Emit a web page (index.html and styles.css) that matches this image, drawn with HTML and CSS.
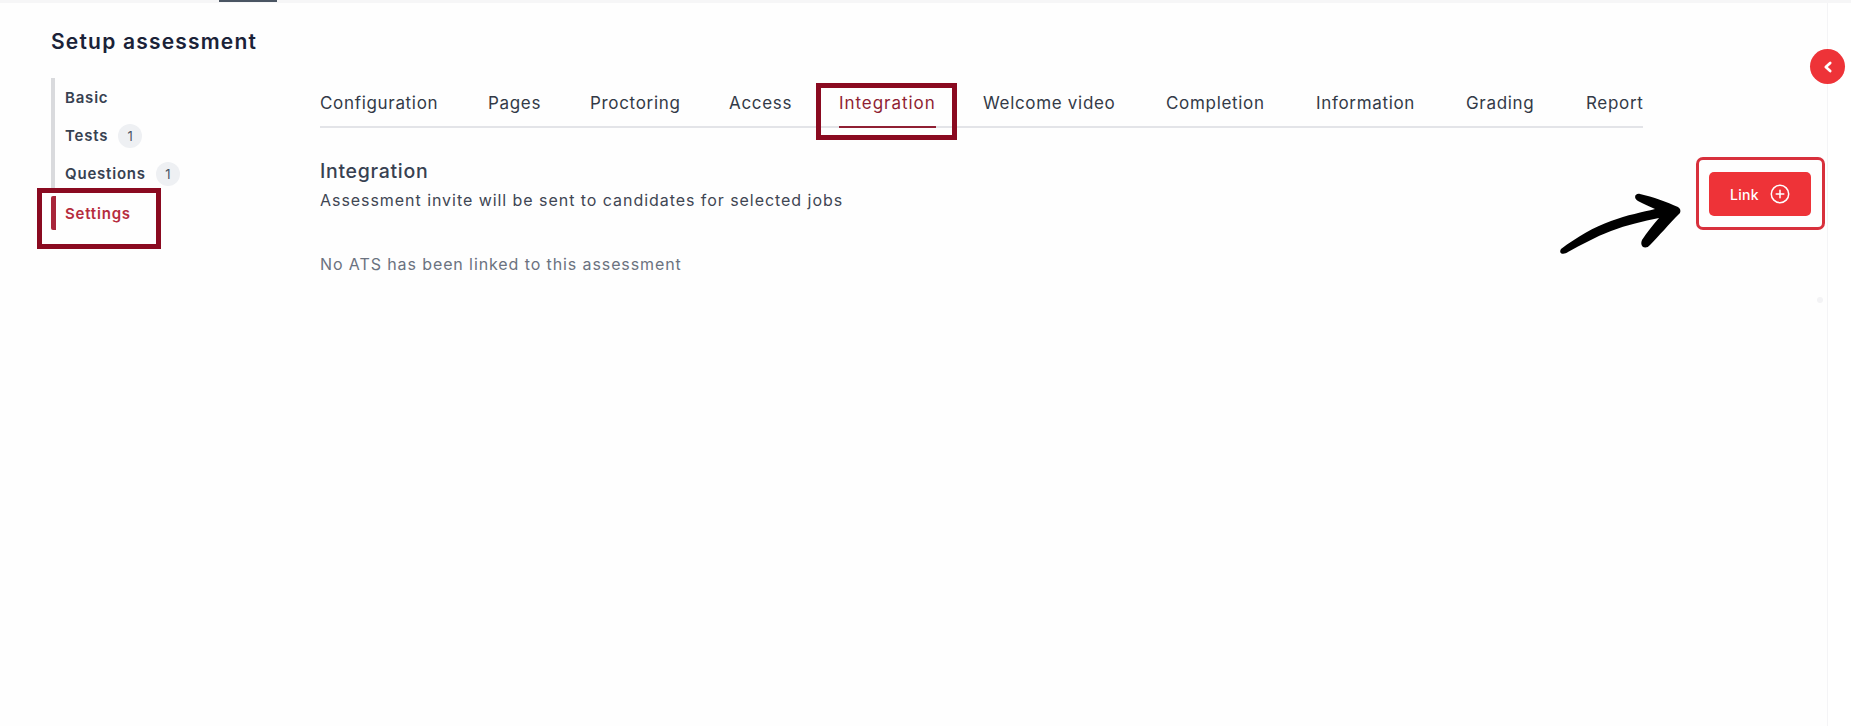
FILE: index.html
```html
<!DOCTYPE html>
<html lang="en">
<head>
<meta charset="utf-8">
<title>Setup assessment</title>
<link rel="stylesheet" href="styles.css">
</head>
<body>
<div class="topbar"><span class="topbar-mark"></span></div>
<div class="page">
  <aside class="sidebar">
    <h1 class="title">Setup assessment</h1>
    <nav class="side-nav">
      <a class="side-item">Basic</a>
      <a class="side-item">Tests <span class="count">1</span></a>
      <a class="side-item">Questions <span class="count">1</span></a>
      <a class="side-item active">Settings</a>
    </nav>
  </aside>
  <main class="content">
    <div class="tabs">
      <a class="tab">Configuration</a>
      <a class="tab">Pages</a>
      <a class="tab">Proctoring</a>
      <a class="tab">Access</a>
      <a class="tab active">Integration</a>
      <a class="tab">Welcome video</a>
      <a class="tab">Completion</a>
      <a class="tab">Information</a>
      <a class="tab">Grading</a>
      <a class="tab">Report</a>
    </div>
    <div class="panel">
      <div class="panel-head">
        <div>
          <h2 class="panel-title">Integration</h2>
          <p class="panel-sub">Assessment invite will be sent to candidates for selected jobs</p>
        </div>
        <button class="link-btn">Link
          <svg class="plus" viewBox="0 0 20 20" width="20" height="20" fill="none" stroke="currentColor" stroke-width="1.5" stroke-linecap="round"><circle cx="10" cy="10" r="8.7"/><path d="M10 6.2v7.6M6.2 10h7.6"/></svg>
        </button>
      </div>
      <p class="empty">No ATS has been linked to this assessment</p>
    </div>
  </main>
  <div class="rail">
    <button class="collapse"><svg viewBox="0 0 14 14" width="14" height="14" fill="none" stroke="#fff" stroke-width="2.7" stroke-linecap="round" stroke-linejoin="round"><path d="M9.2 3 4.8 7l4.4 4"/></svg></button>
    <span class="rail-dot"></span>
  </div>
</div>
<span class="mark mark-settings"></span>
<span class="mark mark-tab"></span>
<span class="mark-link"></span>
<svg class="arrow" viewBox="0 0 125 70" width="125" height="70"><path fill="#000" d="M2 57C18 45 35 35 52 29 68 23 84 20 96 17 90 14 84 12 79 9 74 6 76 1 81 2 94 5 108 10 119 15 122 17 122 20 120 22 110 32 100 44 91 53 87 58 80 55 83 48 88 40 94 33 100 26 84 29 68 33 52 39 36 45 22 53 9 60 5 63-1 62 2 57Z"/></svg>
</body>
</html>
```
FILE: styles.css
```css
* { box-sizing: border-box; }
html, body { margin: 0; height: 726px; overflow: hidden; background: #fefefe; }
body { font-family: Inter, "Open Sans", sans-serif; color: #374151; }
.topbar { height: 3px; background: #f6f6f7; padding-left: 219px; }
.topbar-mark { display: block; width: 58px; height: 2px; background: #4b5563; }
.page { display: flex; height: 723px; }
.sidebar { width: 320px; flex: none; padding: 26px 0 0 51px; }
.title { margin: 0; font-size: 21px; line-height: 26px; font-weight: 600; color: #1a2238; letter-spacing: 1.2px; white-space: nowrap; }
.side-nav { display: flex; flex-direction: column; margin-top: 23px; }
.side-item { display: flex; align-items: center; gap: 10px; height: 38.4px; padding-left: 10px; border-left: 4px solid #d9dadd; font-size: 15px; font-weight: 600; color: #374151; letter-spacing: .8px; }
.side-item.active { height: 34px; margin-top: 3px; border-left: 5px solid #a8253a; border-radius: 2px; padding-left: 9px; color: #b62c3e; }
.count { display: flex; align-items: center; justify-content: center; width: 24px; height: 24px; border-radius: 50%; background: #eef0f3; font-size: 13px; font-weight: 400; color: #4b5563; letter-spacing: 0; }
.content { width: 1323px; flex: none; padding-top: 83px; }
.tabs { display: grid; grid-template-columns: 168px 102px 139px 110px 144px 183px 150px 150px 120px 57px; height: 42px; border-bottom: 2px solid #e3e4e8; }
.tab { justify-self: start; height: 42px; font-size: 17px; line-height: 34px; color: #333a47; letter-spacing: .68px; white-space: nowrap; }
.tab.active { color: #8f1f33; border-bottom: 2px solid #8f1f33; letter-spacing: .95px; }
.panel { padding-top: 30px; }
.panel-head { display: flex; justify-content: space-between; width: 1491px; }
.panel-title { margin: 0; font-size: 19.5px; line-height: 26px; font-weight: 500; color: #374151; letter-spacing: .7px; }
.panel-sub { margin: 4px 0 0; font-size: 16px; line-height: 24px; color: #3f4653; white-space: nowrap; letter-spacing: .95px; }
.link-btn { display: flex; align-items: center; justify-content: center; gap: 11px; width: 102px; height: 44px; margin-top: 14px; border: 0; border-radius: 5px; background: #ee3338; color: #fff; font: 500 14px Inter, sans-serif; letter-spacing: .3px; }
.empty { margin: 36px 0 0; font-size: 16px; line-height: 24px; color: #6b7280; letter-spacing: .9px; }
.rail { position: absolute; left: 1827px; top: 3px; bottom: 0; width: 24px; border-left: 1px solid #f4f4f6; background: #fff; }
.collapse { position: absolute; left: -18px; top: 46px; display: flex; align-items: center; justify-content: center; width: 35px; height: 35px; padding: 0; border: 0; border-radius: 50%; background: #ee3338; }
.rail-dot { position: absolute; left: -11px; top: 294px; width: 6px; height: 6px; border-radius: 50%; background: #f3f3f5; }
.mark { position: absolute; border: 5px solid #8a0a20; }
.mark-settings { left: 37px; top: 188px; width: 124px; height: 61px; }
.mark-tab { left: 816px; top: 83px; width: 141px; height: 57px; }
.mark-link { position: absolute; left: 1696px; top: 157px; width: 129px; height: 73px; border: 3px solid #d8303c; border-radius: 7px; }
.arrow { position: absolute; left: 1559px; top: 192px; }
```
